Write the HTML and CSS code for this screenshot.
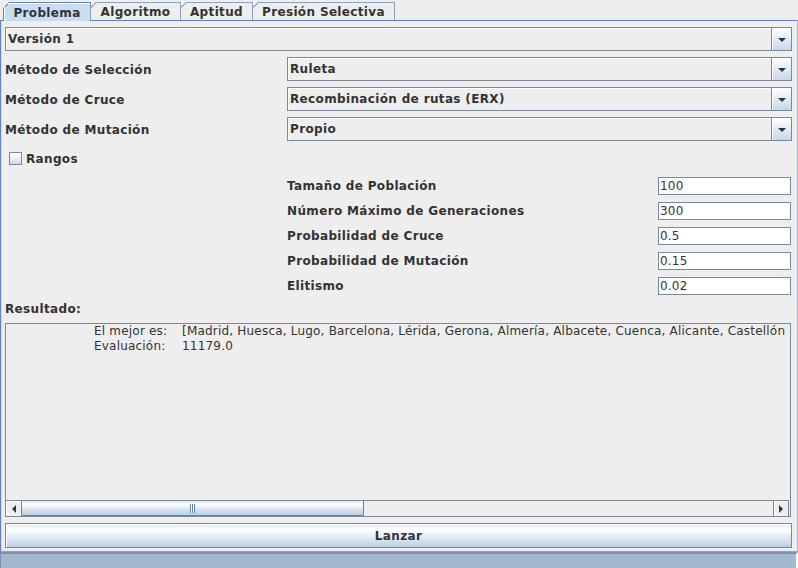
FILE: index.html
```html
<!DOCTYPE html>
<html lang="es">
<head>
<meta charset="utf-8">
<title>Problema</title>
<link rel="stylesheet" href="styles.css">
</head>
<body>
<div class="app">
  <div class="tabs">
    <div class="tab sel w1">Problema</div>
    <div class="tab w2">Algoritmo</div>
    <div class="tab w3">Aptitud</div>
    <div class="tab w4">Presión Selectiva</div>
  </div>
  <div class="panel">
    <div class="combo full">
      <span class="combo-text">Versión 1</span>
      <span class="combo-btn"><span class="arrow-down"></span></span>
    </div>
    <div class="methods">
      <label class="lbl">Método de Selección</label>
      <div class="combo"><span class="combo-text">Ruleta</span><span class="combo-btn"><span class="arrow-down"></span></span></div>
      <label class="lbl">Método de Cruce</label>
      <div class="combo"><span class="combo-text">Recombinación de rutas (ERX)</span><span class="combo-btn"><span class="arrow-down"></span></span></div>
      <label class="lbl">Método de Mutación</label>
      <div class="combo"><span class="combo-text">Propio</span><span class="combo-btn"><span class="arrow-down"></span></span></div>
    </div>
    <div class="check-row">
      <span class="checkbox"></span>
      <span class="lbl">Rangos</span>
    </div>
    <div class="params">
      <span class="lbl">Tamaño de Población</span><span class="field">100</span>
      <span class="lbl">Número Máximo de Generaciones</span><span class="field">300</span>
      <span class="lbl">Probabilidad de Cruce</span><span class="field">0.5</span>
      <span class="lbl">Probabilidad de Mutación</span><span class="field">0.15</span>
      <span class="lbl">Elitismo</span><span class="field">0.02</span>
    </div>
    <div class="lbl result-title">Resultado:</div>
    <div class="textarea">
      <div class="ta-content">
        <div class="ta-grid">
          <span>El mejor es:</span><span>[Madrid, Huesca, Lugo, Barcelona, Lérida, Gerona, Almería, Albacete, Cuenca, Alicante, Castellón</span>
          <span>Evaluación:</span><span>11179.0</span>
        </div>
      </div>
      <div class="hscroll">
        <span class="sb-btn left"><span class="arrow-left"></span></span>
        <span class="thumb"><span class="grip"></span></span>
        <span class="track"></span>
        <span class="sb-btn right"><span class="arrow-right"></span></span>
      </div>
    </div>
    <div class="button">Lanzar</div>
  </div>
  <div class="bottom-bar"></div>
</div>
</body>
</html>
```
FILE: styles.css
```css
* { box-sizing: border-box; }
html, body {
  margin: 0;
  padding: 0;
}
body {
  width: 798px;
  height: 568px;
  overflow: hidden;
  background: #eeeeee;
  font-family: "DejaVu Sans", "Noto Sans", sans-serif;
  font-size: 12px;
  color: #333333;
  letter-spacing: 0.2px;
}
.app {
  display: flex;
  flex-direction: column;
  height: 568px;
}
.tabs {
  height: 20px;
  display: flex;
  align-items: flex-end;
  padding-left: 3px;
  position: relative;
  z-index: 1;
}
.tab {
  height: 18px;
  display: flex;
  align-items: center;
  justify-content: center;
  font-weight: bold;
  letter-spacing: 0.35px;
  border: 1px solid #8da2c1;
  border-bottom: none;
  background-color: #eeeeee;
  background-origin: border-box;
  background-image: linear-gradient(135deg, transparent 4px, #8da2c1 4px, #8da2c1 5px, transparent 5px);
  clip-path: polygon(6px 0, 100% 0, 100% 100%, 0 100%, 0 6px);
  padding-top: 1px;
}
.tab.sel {
  height: 19px;
  margin-bottom: -1px;
  background-color: #c8ddf2;
  border-color: #6382bf;
  background-image: linear-gradient(135deg, transparent 4px, #6382bf 4px, #6382bf 5px, transparent 5px);
  box-shadow: inset 1px 1px 0 #ffffff;
}
.w1 { width: 88px; }
.w2 { width: 91px; margin-left: -1px; }
.w3 { width: 73px; margin-left: -1px; }
.w4 { width: 143px; margin-left: -1px; }

.panel {
  height: 532px;
  border-top: 1px solid #6382bf;
  border-left: 1px solid #6382bf;
  border-right: 1px solid #a3b8cc;
  border-bottom: 1px solid #8da2c1;
  padding: 6px 5px 0 4px;
  display: flex;
  flex-direction: column;
  box-shadow: inset 1px 0 0 #c8ddf2;
}
.lbl {
  font-weight: bold;
  color: #333333;
  white-space: nowrap;
  letter-spacing: 0.35px;
}
.combo {
  height: 24px;
  display: flex;
  border: 1px solid #7a8a99;
  background: #eeeeee;
  box-shadow: inset 1px 1px 0 #ffffff;
}
.combo.full { margin-bottom: 6px; }
.combo-text {
  flex: 1;
  display: flex;
  align-items: center;
  padding-left: 2px;
  font-weight: bold;
  letter-spacing: 0.35px;
  white-space: nowrap;
  overflow: hidden;
}
.combo-btn {
  width: 20px;
  border-left: 1px solid #7a8a99;
  background: linear-gradient(#ffffff 0%, #eef3fa 30%, #c6d7ec 100%);
  box-shadow: inset 1px 1px 0 #ffffff;
  display: flex;
  align-items: center;
  justify-content: center;
  padding-top: 1px;
}
.arrow-down {
  width: 0;
  height: 0;
  border-left: 4px solid transparent;
  border-right: 4px solid transparent;
  border-top: 4px solid #333333;
}
.methods {
  display: grid;
  grid-template-columns: 282px 1fr;
  row-gap: 6px;
  align-items: center;
}
.methods .lbl { padding-top: 2px; }
.check-row {
  display: flex;
  align-items: center;
  margin-top: 11px;
  height: 13px;
  padding-left: 4px;
  gap: 4px;
}
.checkbox {
  width: 13px;
  height: 13px;
  border: 1px solid #7a8a99;
  background: linear-gradient(#ffffff 0%, #f2f6fb 35%, #c6d7ec 100%);
}
.params {
  display: grid;
  grid-template-columns: 371px 133px;
  margin-left: 282px;
  margin-top: 12px;
  row-gap: 7px;
  align-items: center;
}
.params .lbl { padding-top: 0; }
.field {
  height: 18px;
  border: 1px solid #7a8a99;
  background: #ffffff;
  display: flex;
  align-items: center;
  padding-left: 1px;
  font-weight: normal;
}
.result-title {
  margin-top: 7px;
  line-height: 15px;
  height: 15px;
}
.textarea {
  margin-top: 6px;
  height: 194px;
  width: 786px;
  border: 1px solid #7a8a99;
  display: flex;
  flex-direction: column;
  background: #eeeeee;
}
.ta-content {
  flex: 1;
  overflow: hidden;
  padding: 0 0 0 88px;
}
.ta-grid {
  display: grid;
  grid-template-columns: 88px auto;
  line-height: 15px;
  white-space: nowrap;
}
.hscroll {
  height: 16px;
  display: flex;
  border-top: 1px solid #7a8a99;
  margin-right: 1px;
}
.sb-btn {
  width: 16px;
  background: #eeeeee;
  display: flex;
  align-items: center;
  justify-content: center;
  box-shadow: inset 1px 1px 0 #ffffff;
}
.sb-btn.left { border-right: 1px solid #7a8a99; }
.sb-btn.right { border-left: 1px solid #7a8a99; border-right: 1px solid #7a8a99; }
.arrow-left {
  width: 0; height: 0;
  border-top: 4px solid transparent;
  border-bottom: 4px solid transparent;
  border-right: 4px solid #333333;
}
.arrow-right {
  width: 0; height: 0;
  border-top: 4px solid transparent;
  border-bottom: 4px solid transparent;
  border-left: 4px solid #333333;
}
.thumb {
  width: 342px;
  border: 1px solid #6382bf;
  border-top: none;
  border-left: none;
  background: linear-gradient(#dde8f3 0%, #ffffff 25%, #dde8f3 55%, #b8cfe5 100%);
  display: flex;
  align-items: center;
  justify-content: center;
}
.grip {
  width: 5px;
  height: 9px;
  background: repeating-linear-gradient(90deg, #6382bf 0 1px, #ffffff 1px 2px);
}
.track { flex: 1; }
.button {
  margin-top: 6px;
  height: 25px;
  width: 787px;
  border: 1px solid #7a8a99;
  background: linear-gradient(#dde8f3 0%, #ffffff 25%, #ecf2f9 45%, #b8cfe5 100%);
  display: flex;
  align-items: center;
  justify-content: center;
  font-weight: bold;
  letter-spacing: 0.35px;
  box-shadow: inset 1px 1px 0 #ffffff;
}
.bottom-bar {
  flex: 1;
  background: #a3b8cc;
  border-top: 2px solid #7b90b0;
  border-left: 1px solid #7b90b0;
  border-right: 2px solid #ffffff;
}
```
